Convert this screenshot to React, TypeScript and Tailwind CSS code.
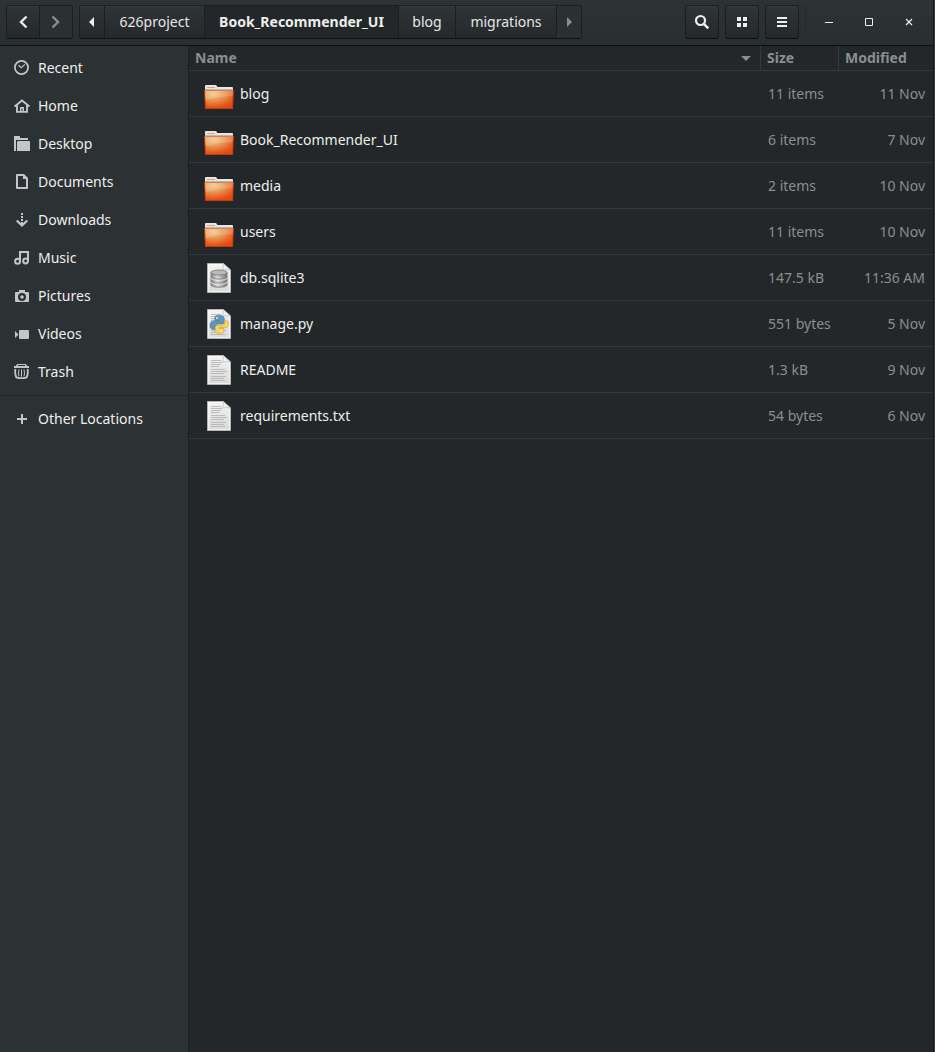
import type { ReactNode } from "react";

const sidebarIcon = "h-4 w-4 shrink-0 fill-[#c4c6c6]";

const places: { label: string; icon: ReactNode }[] = [
  {
    label: "Recent",
    icon: (
      <svg viewBox="0 0 16 16" className={sidebarIcon} aria-hidden="true">
        <circle cx="7.5" cy="7.5" r="6.6" fill="none" stroke="#c4c6c6" strokeWidth="1.8" />
        <path d="M4.5 5.2 7.2 7.6 11 4.4" fill="none" stroke="#c4c6c6" strokeWidth="1.2" />
      </svg>
    ),
  },
  {
    label: "Home",
    icon: (
      <svg viewBox="0 0 16 16" className={sidebarIcon} aria-hidden="true">
        <path d="M.6 8.6 8 2.4l7.4 6.2M3 7v6.900h10V7" fill="none" stroke="#c4c6c6" strokeWidth="1.9" />
        <path d="M6 9h1.500v5H6zM8.500 9H10v5H8.500zM6 9h4v1.500H6z" />
      </svg>
    ),
  },
  {
    label: "Desktop",
    icon: (
      <svg viewBox="0 0 16 16" className={sidebarIcon} aria-hidden="true">
        <path d="M0 15V0h6v2h8v2H2v11z" />
        <path d="M4 5h12v10H3V6z" />
      </svg>
    ),
  },
  {
    label: "Documents",
    icon: (
      <svg viewBox="0 0 16 16" className={sidebarIcon} aria-hidden="true">
        <path d="M3 0h7l4 4v10q0 1-1 1H3q-1 0-1-1V1q0-1 1-1zm1 2v11h8V5H9V2z" fillRule="evenodd" />
      </svg>
    ),
  },
  {
    label: "Downloads",
    icon: (
      <svg viewBox="0 0 16 16" className={sidebarIcon} aria-hidden="true">
        <path d="M7 1h2v2H7zM7 4h2v2H7zM7 7h2v2H7zM7 10h2v3H7z" />
        <path d="m2.7 8.5 5.3 5 5.3-5" fill="none" stroke="#c4c6c6" strokeWidth="2.2" />
      </svg>
    ),
  },
  {
    label: "Music",
    icon: (
      <svg viewBox="0 0 16 16" className={sidebarIcon} aria-hidden="true">
        <path d="M5 1h10v10h-2V3H7v9H5z" />
        <circle cx="3.6" cy="11.3" r="2.5" fill="none" stroke="#c4c6c6" strokeWidth="2" />
        <circle cx="11.6" cy="11" r="2.4" fill="none" stroke="#c4c6c6" strokeWidth="2" />
      </svg>
    ),
  },
  {
    label: "Pictures",
    icon: (
      <svg viewBox="0 0 16 16" className={sidebarIcon} aria-hidden="true">
        <path
          fillRule="evenodd"
          d="M5 2h6v2h3q1 0 1 1v8q0 1-1 1H2q-1 0-1-1V5q0-1 1-1h3zm3 3a4 4 0 1 0 0 8 4 4 0 0 0 0-8zm0 2.200a1.800 1.800 0 1 1 0 3.600 1.800 1.800 0 0 1 0-3.600z"
        />
      </svg>
    ),
  },
  {
    label: "Videos",
    icon: (
      <svg viewBox="0 0 16 16" className={sidebarIcon} aria-hidden="true">
        <path d="M6 4h8q1 0 1 1v7q0 1-1 1H6q-1 0-1-1V5q0-1 1-1zM1 5l3.500 3.500L1 12z" />
      </svg>
    ),
  },
  {
    label: "Trash",
    icon: (
      <svg viewBox="0 0 16 16" className={sidebarIcon} aria-hidden="true">
        <path d="M0 2h2l1-2h9l1 2h2v2H0zm4-1v1h7V1z" fillRule="evenodd" />
        <path d="M1.500 5q-1 4 .8 8.300 5.200 1.800 10.400 0Q14.500 9 13.500 5" fill="none" stroke="#c4c6c6" strokeWidth="1.800" />
        <path d="M5 5.500q-1 3.500 0 7M7.500 5.500v7M10 5.500q1 3.500 0 7" fill="none" stroke="#c4c6c6" />
      </svg>
    ),
  },
];

function FolderIcon() {
  return (
    <svg viewBox="0 -3 32 32" className="h-8 w-8 shrink-0" aria-hidden="true">
      <defs>
        <radialGradient id="folder-front" cx="0.3" cy="0.15" r="0.95">
          <stop offset="0" stopColor="#f4c48a" />
          <stop offset="0.45" stopColor="#e5924f" />
          <stop offset="0.85" stopColor="#ea5014" />
          <stop offset="1" stopColor="#df4a12" />
        </radialGradient>
      </defs>
      <path d="M2 10V5q0-1 1-1h10l1.500 2H29q1 0 1 1v3z" fill="#e9e7e6" />
      <path d="M4 6.500h8" stroke="#ed9c68" />
      <path d="M2 8.500h28" stroke="#b8b4b1" />
      <path d="M1 9h30l-1 19H2z" fill="#c53c0c" />
      <path d="M2 10h28l-1 17H3z" fill="url(#folder-front)" />
      <path d="M2 10h28l-.3 5Q16 15.500 2.500 19z" fill="#fff" opacity="0.17" />
      <path d="M2 9.500h28" stroke="#d38452" />
    </svg>
  );
}

function FileIcon({ kind }: { kind: "text" | "database" | "python" }) {
  return (
    <svg viewBox="0 0 32 32" className="h-8 w-8 shrink-0" aria-hidden="true">
      <defs>
        <linearGradient id="paper" x1="0" y1="0" x2="0" y2="1">
          <stop offset="0" stopColor="#f3f3f2" />
          <stop offset="1" stopColor="#d9d9d8" />
        </linearGradient>
        <linearGradient id="disk" x1="0" y1="0" x2="1" y2="0">
          <stop offset="0" stopColor="#858585" />
          <stop offset="0.4" stopColor="#d5d5d5" />
          <stop offset="1" stopColor="#777" />
        </linearGradient>
      </defs>
      <path d="M4.500 1.500h16l7 6.500v22.500h-23z" fill="url(#paper)" stroke="#b4b4b2" />
      <path d="M5.500 2.500h14.500l6.500 6v21h-21z" fill="none" stroke="#fff" opacity="0.6" />
      <path d="M20 1.500q1 3-.5 6.500 4-1 8 0z" fill="#f2f2f2" stroke="#bbb" strokeWidth="0.7" />
      {kind !== "database" && (
        <path
          d="M8 6.500h10M8 8.500h11M8 10.500h10M8 12.500h8M8 15.500h14M8 17.500h16M8 19.500h13M8 22.500h15M8 24.500h13M8 26.500h14"
          stroke="#b5b5b5"
          strokeWidth="0.9"
        />
      )}
      {kind === "database" && (
        <g stroke="#777" strokeWidth="0.8" fill="url(#disk)">
          <path d="M8 19v4c0 3 16 3 16 0v-4z" />
          <path d="M8 15v4c0 3 16 3 16 0v-4z" />
          <path d="M8 10v5c0 3 16 3 16 0v-5z" />
          <ellipse cx="16" cy="10.5" rx="8" ry="2.5" fill="#bbb" />
          <path d="M8 15c0 3 16 3 16 0M8 19c0 3 16 3 16 0" fill="none" stroke="#eee" strokeWidth="0.9" transform="translate(0 1)" />
        </g>
      )}
      {kind === "python" && (
        <g>
          <path
            d="M15.800 7.500c-4 0-4 1.600-4 3v2h4.700v.8H10c-2 0-3 1.700-3 4 0 2.500 1.100 4 2.800 4H12v-2.400c0-1.700 1.400-3 3-3h4c1.300 0 2.300-1 2.300-2.300v-3.200c0-1.900-1.900-2.900-5.500-2.900z"
            fill="#5f95ba"
            stroke="#447594"
            strokeWidth="0.6"
          />
          <path
            d="M16.700 25.500c4 0 4-1.600 4-3v-2H16v-.8h6.500c2 0 3-1.700 3-4 0-2.500-1.100-3.500-2.800-3.500h-1v2c0 1.700-1.400 3-3 3h-4c-1.300 0-2.500 1-2.500 2.300v3.100c0 1.900 1.700 2.900 4.500 2.900z"
            fill="#f8d261"
            stroke="#c9a137"
            strokeWidth="0.6"
          />
          <circle cx="14" cy="10" r="0.9" fill="#eef5fa" />
          <circle cx="18.5" cy="23" r="0.9" fill="#fff8df" />
        </g>
      )}
    </svg>
  );
}

const files: { name: string; size: string; modified: string; icon: ReactNode }[] = [
  { name: "blog", size: "11 items", modified: "11 Nov", icon: <FolderIcon /> },
  { name: "Book_Recommender_UI", size: "6 items", modified: "7 Nov", icon: <FolderIcon /> },
  { name: "media", size: "2 items", modified: "10 Nov", icon: <FolderIcon /> },
  { name: "users", size: "11 items", modified: "10 Nov", icon: <FolderIcon /> },
  { name: "db.sqlite3", size: "147.5 kB", modified: "11:36 AM", icon: <FileIcon kind="database" /> },
  { name: "manage.py", size: "551 bytes", modified: "5 Nov", icon: <FileIcon kind="python" /> },
  { name: "README", size: "1.3 kB", modified: "9 Nov", icon: <FileIcon kind="text" /> },
  { name: "requirements.txt", size: "54 bytes", modified: "6 Nov", icon: <FileIcon kind="text" /> },
];

const raised =
  "flex items-center justify-center bg-linear-to-b from-[#2f3436] to-[#26292b] shadow-[inset_0_1px_0_#383e40]";
const group = "flex h-[34px] overflow-hidden rounded-[3px] border border-[#1b1e1f] border-b-[#0e1011]";
const tool = `${raised} h-[34px] w-[34px] rounded-[3px] border border-[#1b1e1f] border-b-[#0e1011]`;
const windowButton = "flex h-10 w-10 items-center justify-center";

function HeaderBar() {
  return (
    <header className="flex h-[46px] shrink-0 items-start justify-between border-b border-[#0b0d0e] bg-linear-to-b from-[#2d3234] to-[#292e30] pt-[5px] pr-1 pl-1.5">
      <nav aria-label="Path" className="flex gap-1.5 text-[14px] text-[#e6e6e4]">
        <div className={group}>
          <button aria-label="Back" className={`${raised} w-8`}>
            <svg viewBox="0 0 16 16" className="h-4 w-4" fill="none" stroke="#eeeeec" strokeWidth="2.4">
              <path d="M11.500 2.500 6 8l5.500 5.500" />
            </svg>
          </button>
          <button aria-label="Forward" disabled className="flex w-[33px] items-center justify-center border-l border-[#1b1e1f] bg-[#2b3032]">
            <svg viewBox="0 0 16 16" className="h-4 w-4" fill="none" stroke="#8b8e8f" strokeWidth="2.4">
              <path d="M4.500 2.500 10 8l-5.500 5.500" />
            </svg>
          </button>
        </div>
        <div className={group}>
          <button aria-label="Scroll path left" className={`${raised} w-[25px] border-r border-[#1b1e1f]`}>
            <svg viewBox="0 0 16 16" className="h-4 w-4" fill="#eeeeec">
              <path d="M10 3v10L5 8z" />
            </svg>
          </button>
          <button className={`${raised} w-[100px] border-r border-[#1b1e1f]`}>626project</button>
          <button aria-current="page" className="flex w-[194px] items-center justify-center border-r border-[#1b1e1f] bg-[#232729] font-bold text-[#eeeeec]">
            Book_Recommender_UI
          </button>
          <button className={`${raised} w-[57px] border-r border-[#1b1e1f]`}>blog</button>
          <button className={`${raised} w-[101px] border-r border-[#1b1e1f]`}>migrations</button>
          <button aria-label="Scroll path right" disabled className="flex w-6 items-center justify-center bg-[#2b3032]">
            <svg viewBox="0 0 16 16" className="h-4 w-4" fill="#8b8e8f">
              <path d="M6 3v10l5-5z" />
            </svg>
          </button>
        </div>
      </nav>
      <div className="flex items-center">
        <div className="flex gap-1.5">
          <button aria-label="Search" className={tool}>
            <svg viewBox="0 0 16 16" className="h-4 w-4" fill="none" stroke="#eeeeec">
              <circle cx="6.5" cy="6.5" r="4.5" strokeWidth="2.2" />
              <path d="m9.800 9.800 4.500 4.500" strokeWidth="2.6" />
            </svg>
          </button>
          <button aria-label="Icon view" className={tool}>
            <svg viewBox="0 0 16 16" className="h-4 w-4" fill="#eeeeec">
              <path d="M3 3h4v4H3zM9 3h4v4H9zM3 9h4v4H3zM9 9h4v4H9z" />
            </svg>
          </button>
          <button aria-label="Menu" className={tool}>
            <svg viewBox="0 0 16 16" className="h-4 w-4" fill="#eeeeec">
              <path d="M3 3h10v2H3zM3 7h10v2H3zM3 11h10v2H3z" />
            </svg>
          </button>
        </div>
        <div className="ml-1.5 h-[34px] w-px bg-[#272b2d]" />
        <div className="-my-1 ml-[3px] flex">
          <button aria-label="Minimize" className={windowButton}>
            <svg viewBox="0 0 16 16" className="h-4 w-4" fill="#eeeeec">
              <path d="M4 8h8v1H4z" />
            </svg>
          </button>
          <button aria-label="Maximize" className={windowButton}>
            <svg viewBox="0 0 16 16" className="h-4 w-4" fill="none" stroke="#eeeeec">
              <path d="M4.500 4.500h7v7h-7z" />
            </svg>
          </button>
          <button aria-label="Close" className={windowButton}>
            <svg viewBox="0 0 16 16" className="h-4 w-4" fill="none" stroke="#eeeeec" strokeWidth="1.2">
              <path d="m5 5 6 6M11 5l-6 6" />
            </svg>
          </button>
        </div>
      </div>
    </header>
  );
}

function Sidebar() {
  return (
    <aside className="w-[189px] shrink-0 border-r border-[#1d2022] bg-[#2c3133] pt-[3px] text-[14px] text-[#eeeeec]">
      <ul>
        {places.map((place) => (
          <li key={place.label}>
            <a href="#" className="flex h-[38px] items-center gap-2 pl-3.5">
              {place.icon}
              {place.label}
            </a>
          </li>
        ))}
      </ul>
      <div className="mt-1 border-t border-[#24282a] pt-1">
        <a href="#" className="flex h-[38px] items-center gap-2 pl-3.5">
          <svg viewBox="0 0 16 16" className={sidebarIcon} aria-hidden="true">
            <path d="M7 3h2v4h4v2H9v4H7V9H3V7h4z" />
          </svg>
          Other Locations
        </a>
      </div>
    </aside>
  );
}

function FileTable() {
  return (
    <main className="min-w-0 flex-1 bg-[#232729]">
      <table className="w-full table-fixed border-separate border-spacing-0 text-[14px] text-[#8b8e8f]">
        <colgroup>
          <col />
          <col className="w-[78px]" />
          <col className="w-[94px]" />
        </colgroup>
        <thead>
          <tr className="h-[25px] text-left leading-5">
            <th className="border-r border-b border-[#34393b] px-1.5 py-0 font-bold" aria-sort="ascending">
              <button className="flex w-full items-center justify-between">
                Name
                <svg viewBox="0 0 16 16" className="h-4 w-4" fill="#8b8e8f" aria-hidden="true">
                  <path d="M3 6h10l-5 5z" />
                </svg>
              </button>
            </th>
            <th className="border-r border-b border-[#34393b] px-1.5 py-0 font-bold">
              <button>Size</button>
            </th>
            <th className="border-b border-[#34393b] px-1.5 py-0 font-bold">
              <button>Modified</button>
            </th>
          </tr>
        </thead>
        <tbody>
          {files.map((file) => (
            <tr key={file.name} className="h-[46px]">
              <td className="border-b border-[#34393b] py-0 pl-3.5 text-[#eeeeec]">
                <div className="flex items-center gap-[5px]">
                  {file.icon}
                  {file.name}
                </div>
              </td>
              <td className="border-b border-[#34393b] py-0 pl-[7px] whitespace-nowrap">{file.size}</td>
              <td className="border-b border-[#34393b] py-0 pr-2 text-right whitespace-nowrap">{file.modified}</td>
            </tr>
          ))}
        </tbody>
      </table>
    </main>
  );
}

export default function App() {
  return (
    <div className="flex min-h-screen bg-[#3d3c39] pr-px font-['Noto_Sans','Liberation_Sans',sans-serif] leading-5">
      <div className="flex min-w-0 flex-1 flex-col border-r border-[#151819] bg-[#232729]">
        <HeaderBar />
        <div className="flex flex-1">
          <Sidebar />
          <FileTable />
        </div>
      </div>
    </div>
  );
}
